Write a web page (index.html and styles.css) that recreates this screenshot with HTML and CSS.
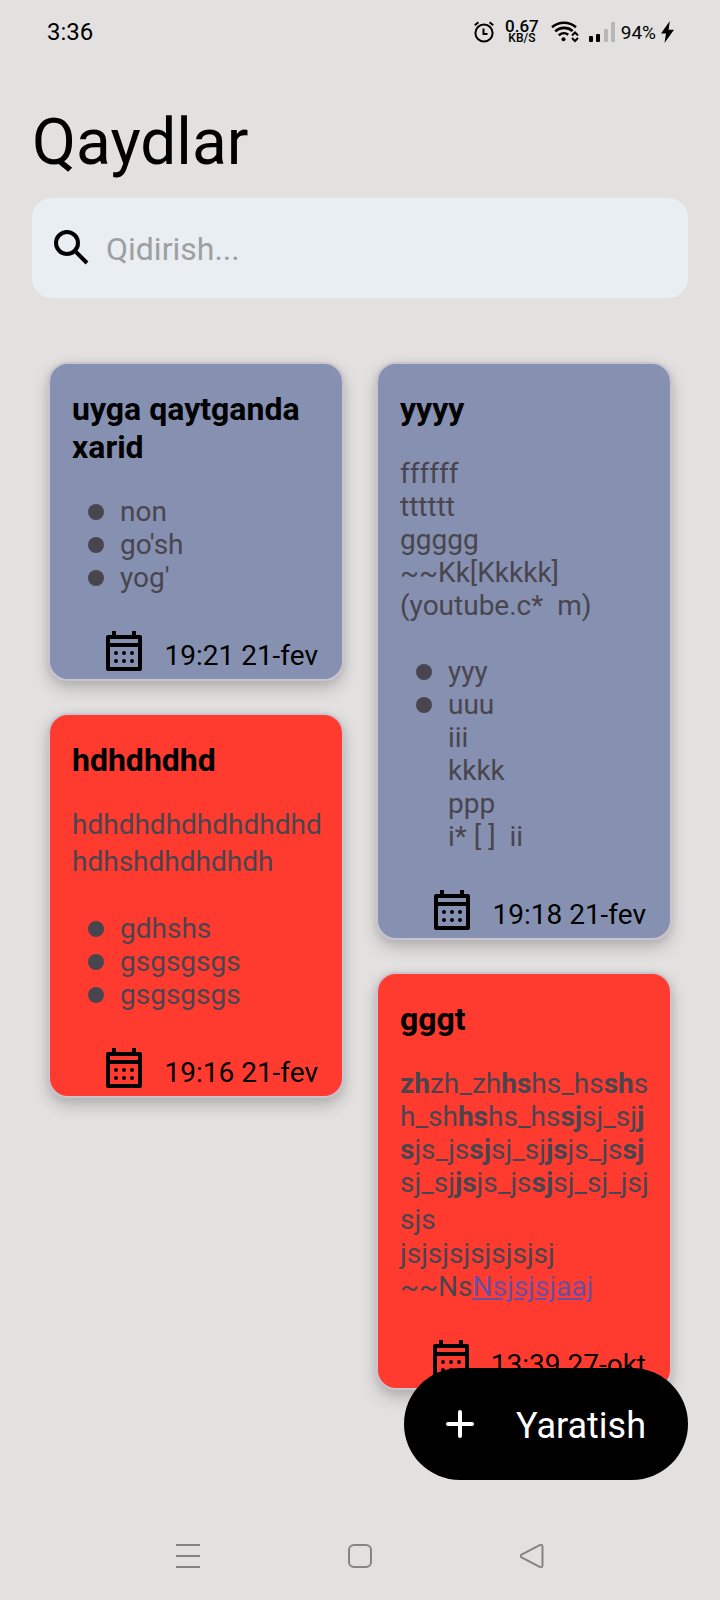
FILE: index.html
```html
<!DOCTYPE html>
<html lang="uz">
<head>
<meta charset="utf-8">
<meta name="viewport" content="width=device-width, initial-scale=1">
<title>Qaydlar</title>
<link rel="stylesheet" href="styles.css">
</head>
<body>
<svg class="sprite" aria-hidden="true">
  <symbol id="calendar" viewBox="0 0 24 24">
    <path fill="none" stroke="currentColor" stroke-width="2" stroke-linejoin="round" d="M4 5h16v16H4zM4 9h16"/>
    <path fill="none" stroke="currentColor" stroke-width="2" d="M7 2v3M17 2v3"/>
    <g fill="currentColor"><circle cx="8" cy="13" r="1"/><circle cx="12" cy="13" r="1"/><circle cx="16" cy="13" r="1"/><circle cx="8" cy="17" r="1"/><circle cx="12" cy="17" r="1"/><circle cx="16" cy="17" r="1"/></g>
  </symbol>
</svg>
<div class="app">
  <div class="status">
    <time class="clock">3:36</time>
    <div class="indicators">
      <svg class="alarm" width="20" height="22" viewBox="0 0 20 22" fill="none" stroke="#000" stroke-width="2"><circle cx="10" cy="12" r="8.6"/><path d="M9.500 7.500v5.500h4"/><path d="M.8 4.200l3.600-3M19.200 4.200l-3.600-3"/></svg>
      <div class="speed"><span class="rate">0.67</span><span class="unit">KB/S</span></div>
      <svg class="wifi" width="28" height="22" viewBox="0 0 28 22" fill="none" stroke="#000" stroke-width="2.600"><path d="M1 6.200C8 .2 18 .2 25 6.200M4.200 10.400c5-4.600 12.600-4.600 17.400-.4M7.800 14.400c2.600-2.600 6.600-2.800 9.400-.6"/><circle cx="12.500" cy="18.200" r="2" fill="#000" stroke="none"/><path stroke-width="2" d="M21 14.500l3-3 3 3M21 17l3 3 3-3"/></svg>
      <svg class="signal" width="26" height="20" viewBox="0 0 26 20"><rect y="14" width="4" height="6" rx="1"/><rect x="7" y="12" width="4" height="8" rx="1"/><g fill="#b7b7b6"><rect x="15" y="7" width="4" height="13" rx="1"/><rect x="22" width="4" height="20" rx="1"/></g></svg>
      <span class="battery">94%</span>
      <svg class="bolt" width="13" height="22" viewBox="0 0 13 22"><path d="M8.800 0L0 12.500h5L3.500 22 13 8.700H7.600z"/></svg>
    </div>
  </div>

  <header class="header">
    <h1 class="heading">Qaydlar</h1>
    <label class="search">
      <svg width="48" height="48" viewBox="0 0 24 24" fill="none" stroke="#000" stroke-width="2"><circle cx="9.500" cy="9.500" r="5.500"/><path d="M14 14l5.500 5.500"/></svg>
      <input class="search-input" type="search" placeholder="Qidirish..." aria-label="Qidirish">
    </label>
  </header>

  <main class="notes">
    <div class="column">
      <article class="card blue">
        <h2 class="title">uyga qaytganda xarid</h2>
        <div class="body">
          <ul class="list"><li>non</li><li>go'sh</li><li>yog'</li></ul>
        </div>
        <footer class="date"><svg class="cal"><use href="#calendar"/></svg><time>19:21 21-fev</time></footer>
      </article>
      <article class="card red">
        <h2 class="title">hdhdhdhd</h2>
        <div class="body">
          <p>hdhdhdhdhdhdhdhd<span class="tail">hdhshdhdhdhdh</span></p>
          <ul class="list"><li>gdhshs</li><li>gsgsgsgs</li><li>gsgsgsgs</li></ul>
        </div>
        <footer class="date"><svg class="cal"><use href="#calendar"/></svg><time>19:16 21-fev</time></footer>
      </article>
    </div>
    <div class="column">
      <article class="card blue">
        <h2 class="title">yyyy</h2>
        <div class="body">
          <p>ffffff<br>tttttt<br>ggggg<br>~~Kk[Kkkkk]<br>(youtube.c*&nbsp; m)</p>
          <ul class="list"><li>yyy</li><li>uuu<br>iii<br>kkkk<br>ppp<br>i* [ ]&nbsp; ii</li></ul>
        </div>
        <footer class="date"><svg class="cal"><use href="#calendar"/></svg><time>19:18 21-fev</time></footer>
      </article>
      <article class="card red">
        <h2 class="title">gggt</h2>
        <div class="body">
          <p><b>zh</b>zh_zh<b>hs</b>hs_hs<b>sh</b>s<br>h_sh<b>hs</b>hs_hs<b>sj</b>sj_sj<b>j</b><br><b>s</b>js_js<b>sj</b>sj_sj<b>js</b>js_js<b>sj</b><br>sj_sj<b>js</b>js_js<b>sj</b>sj_sj_jsj<span class="tail">sjs</span>jsjsjsjsjsjsjsj<br>~~Ns<a class="link" href="#">Nsjsjsjaaj</a></p>
        </div>
        <footer class="date"><svg class="cal"><use href="#calendar"/></svg><time>13:39 27-okt</time></footer>
      </article>
    </div>
  </main>

  <button class="create" type="button">
    <svg width="48" height="48" viewBox="0 0 48 48" stroke="#fff" stroke-width="4" stroke-linecap="round"><path d="M24 12v24M12 24h24"/></svg>
    <span class="create-label">Yaratish</span>
  </button>

  <nav class="navbar">
    <button type="button" aria-label="Recent"><svg width="24" height="24" viewBox="0 0 24 24"><path d="M0 1h24M0 12h24M0 23h24"/></svg></button>
    <button type="button" aria-label="Home"><svg width="24" height="24" viewBox="0 0 24 24"><rect x="1" y="1" width="22" height="22" rx="5"/></svg></button>
    <button type="button" aria-label="Back"><svg width="24" height="24" viewBox="0 0 24 24"><path d="M1.500 10.700L19.700 1.200Q22.500 0 22.500 3v18q0 3-2.800 1.800L1.500 13.300q-2-1.300 0-2.600z"/></svg></button>
  </nav>
</div>
</body>
</html>
```
FILE: styles.css
```css
* { box-sizing: border-box; }
body {
  margin: 0;
  background: #e2e1df;
  color: #000;
  font-family: Roboto, "Noto Sans", sans-serif;
}
h1, h2, p, ul { margin: 0; padding: 0; }
button { border: 0; padding: 0; background: none; font: inherit; cursor: pointer; }
svg { display: block; flex: none; }
.sprite { position: absolute; width: 0; height: 0; }

.app { min-height: 100vh; display: flex; flex-direction: column; }

.status {
  height: 64px;
  padding: 0 46px 0 47px;
  display: flex;
  align-items: center;
  justify-content: space-between;
}
.clock { font-size: 24px; }
.indicators { display: flex; align-items: center; }
.speed {
  display: flex;
  flex-direction: column;
  align-items: center;
  margin: 0 12px 0 11px;
  font-weight: 500;
}
.rate { font-size: 17px; line-height: 12px; }
.unit { font-size: 12px; line-height: 12px; }
.signal { margin: 0 6px 0 10px; }
.battery { font-size: 19px; }
.bolt { margin-left: 5px; }

.header { padding: 41px 32px 0; }
.heading { font-size: 64px; line-height: 76px; font-weight: 400; }
.search {
  margin-top: 17px;
  height: 100px;
  padding: 0 16px;
  display: flex;
  align-items: center;
  gap: 10px;
  border-radius: 20px;
  background: #e9eef2;
}
.search-input {
  flex: 1;
  min-width: 0;
  border: 0;
  padding: 2px 0 0;
  outline: 0;
  background: none;
  color: #000;
  font: inherit;
  font-size: 32px;
  line-height: 38px;
}
.search-input::placeholder { color: #9d9fa2; opacity: 1; }

.notes {
  display: grid;
  grid-template-columns: 1fr 1fr;
  align-items: start;
  gap: 32px;
  padding: 64px 48px 0;
}
.column { display: flex; flex-direction: column; gap: 32px; min-width: 0; }
.card {
  border: 2px solid #cac4d0;
  border-radius: 20px;
  padding: 26px 22px 4px;
  box-shadow: 0 8px 16px rgba(0, 0, 0, .18), 0 2px 10px rgba(0, 0, 0, .08);
}
.blue { background: #8690b0; }
.red { background: #ff3b30; }
.title { font-size: 32px; line-height: 38px; font-weight: 700; }
.body {
  margin: 29px 0 33px;
  color: #49454f;
  font-size: 28px;
  line-height: 33px;
  white-space: nowrap;
}
.tail { display: block; padding: 4px 0 1px; }
.list { list-style: none; padding-left: 48px; }
.body p + .list { margin-top: 33px; }
.list li { position: relative; }
.list li::before {
  content: "";
  position: absolute;
  left: -32px;
  top: 9px;
  width: 16px;
  height: 16px;
  border-radius: 50%;
  background: #49454f;
}
.link { color: #6750a4; }
.date {
  display: flex;
  justify-content: flex-end;
  align-items: flex-end;
  gap: 16px;
  padding-right: 2px;
  font-size: 28px;
  line-height: 38px;
}
.cal { width: 48px; height: 48px; }

.create {
  position: fixed;
  right: 32px;
  bottom: 120px;
  height: 112px;
  padding: 0 42px 0 32px;
  display: flex;
  align-items: center;
  gap: 32px;
  border-radius: 56px;
  background: #000;
  color: #fff;
  font-size: 36px;
}
.create-label { padding-top: 4px; }

.navbar {
  margin-top: auto;
  height: 88px;
  display: flex;
  justify-content: center;
  align-items: center;
  gap: 148px;
}
.navbar svg { fill: none; stroke: #858483; stroke-width: 2; }
```
